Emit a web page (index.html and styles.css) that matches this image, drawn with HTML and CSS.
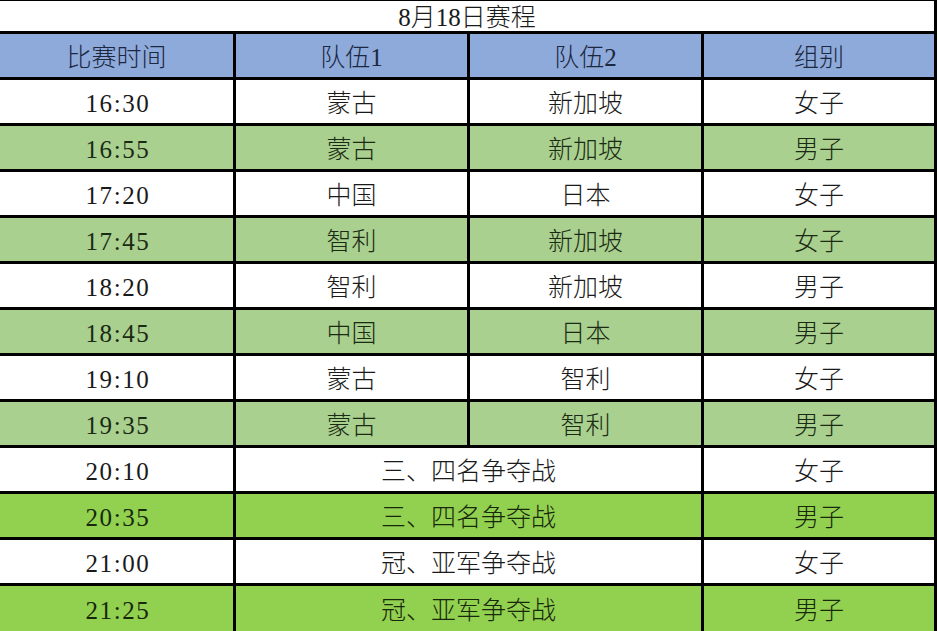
FILE: index.html
```html
<!DOCTYPE html>
<html lang="zh-CN">
<head>
<meta charset="utf-8">
<title>8月18日赛程</title>
<link rel="stylesheet" href="styles.css">
</head>
<body>
<div class="sheet">
  <div class="cell title span4">8月18日赛程</div>

  <div class="cell head">比赛时间</div>
  <div class="cell head">队伍1</div>
  <div class="cell head">队伍2</div>
  <div class="cell head">组别</div>

  <div class="cell w num">16:30</div><div class="cell w">蒙古</div><div class="cell w">新加坡</div><div class="cell w">女子</div>
  <div class="cell g num">16:55</div><div class="cell g">蒙古</div><div class="cell g">新加坡</div><div class="cell g">男子</div>
  <div class="cell w num">17:20</div><div class="cell w">中国</div><div class="cell w">日本</div><div class="cell w">女子</div>
  <div class="cell g num">17:45</div><div class="cell g">智利</div><div class="cell g">新加坡</div><div class="cell g">女子</div>
  <div class="cell w num">18:20</div><div class="cell w">智利</div><div class="cell w">新加坡</div><div class="cell w">男子</div>
  <div class="cell g num">18:45</div><div class="cell g">中国</div><div class="cell g">日本</div><div class="cell g">男子</div>
  <div class="cell w num">19:10</div><div class="cell w">蒙古</div><div class="cell w">智利</div><div class="cell w">女子</div>
  <div class="cell g num">19:35</div><div class="cell g">蒙古</div><div class="cell g">智利</div><div class="cell g">男子</div>
  <div class="cell w num">20:10</div><div class="cell w span2">三、四名争夺战</div><div class="cell w">女子</div>
  <div class="cell b num">20:35</div><div class="cell b span2">三、四名争夺战</div><div class="cell b">男子</div>
  <div class="cell w num">21:00</div><div class="cell w span2">冠、亚军争夺战</div><div class="cell w">女子</div>
  <div class="cell b num last">21:25</div><div class="cell b span2 last">冠、亚军争夺战</div><div class="cell b last">男子</div>
</div>
</body>
</html>
```

FILE: styles.css
```css
html, body {
  margin: 0;
  padding: 0;
  background: #ffffff;
}

body {
  width: 938px;
  height: 631px;
  overflow: hidden;
}

.sheet {
  display: grid;
  grid-template-columns: 233px 231px 231px 230px;
  grid-template-rows: 30px 43px repeat(11, 43px) 45px;
  gap: 3px;
  padding: 1px 3px 0 0;
  width: 934px;
  background: #000000;
  font-family: "Liberation Serif", "Noto Sans CJK SC", serif;
  font-size: 25px;
  font-weight: 300;
  color: #1a1a1a;
}

.cell {
  display: flex;
  align-items: center;
  justify-content: center;
  line-height: 1;
  white-space: nowrap;
  padding-top: 4px;
}

.span4 { grid-column: span 4; }
.span2 { grid-column: span 2; }

.title {
  background: #ffffff;
  font-size: 25px;
  padding-top: 3px;
}

.head {
  background: #8eaadb;
  color: #1c2740;
}

.w { background: #ffffff; }
.g { background: #a9d08e; color: #1b2a14; }
.b { background: #92d050; color: #17280c; }

.num {
  letter-spacing: 1.6px;
  padding-left: 3px;
}
```
